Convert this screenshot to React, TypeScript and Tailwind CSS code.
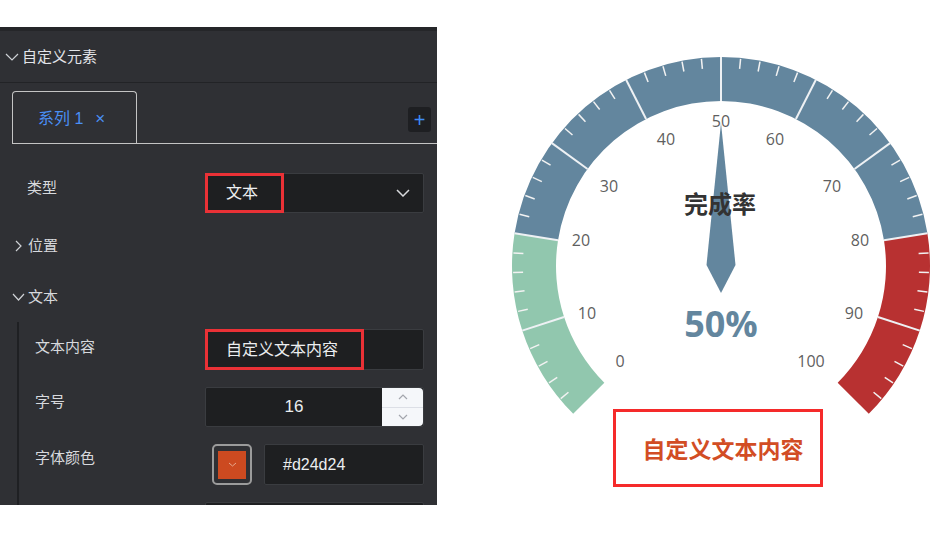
import React from 'react';

const CX = 721;
const CY = 266;
const R = 209;
const RI = 165;

const cn = '"Liberation Sans", "Noto Sans CJK SC", sans-serif';
const gaugeFont = '"Open Sans", "Noto Sans CJK SC", sans-serif';

function pt(v: number, rad: number): [number, number] {
  const a = ((225 - v * 2.7) * Math.PI) / 180;
  return [CX + rad * Math.cos(a), CY - rad * Math.sin(a)];
}

function band(v1: number, v2: number) {
  const [ox1, oy1] = pt(v1, R);
  const [ox2, oy2] = pt(v2, R);
  const [ix2, iy2] = pt(v2, RI);
  const [ix1, iy1] = pt(v1, RI);
  return `M${ox1} ${oy1} A${R} ${R} 0 0 1 ${ox2} ${oy2} L${ix2} ${iy2} A${RI} ${RI} 0 0 0 ${ix1} ${iy1} Z`;
}

const labels: [string, number, number][] = [
  ['0', 620, 361],
  ['10', 587, 313],
  ['20', 581, 240],
  ['30', 609, 186],
  ['40', 666, 139],
  ['50', 721, 121],
  ['60', 775, 139],
  ['70', 832, 186],
  ['80', 860, 240],
  ['90', 854, 313],
  ['100', 811, 361],
];

function Chevron({ dir, w, h, color = '#cfd2d6', sw = 1.2 }: { dir: 'down' | 'right' | 'up'; w: number; h: number; color?: string; sw?: number }) {
  const pts =
    dir === 'down'
      ? `1,1 ${w / 2},${h - 1} ${w - 1},1`
      : dir === 'up'
      ? `1,${h - 1} ${w / 2},1 ${w - 1},${h - 1}`
      : `1,1 ${w - 1},${h / 2} 1,${h - 1}`;
  return (
    <svg width={w} height={h} className="shrink-0">
      <polyline points={pts} fill="none" stroke={color} strokeWidth={sw} />
    </svg>
  );
}

function Gauge() {
  const ticks: number[] = [];
  for (let v = 2; v < 100; v += 2) if (v % 10 !== 0) ticks.push(v);
  const splits = [10, 20, 30, 40, 50, 60, 70, 80, 90];
  return (
    <svg width={496} height={544} viewBox="437 0 496 544" className="shrink-0">
      <path d={band(0, 20)} fill="#91c7ae" />
      <path d={band(20, 80)} fill="#63869e" />
      <path d={band(80, 100)} fill="#b83131" />
      {ticks.map((v) => {
        const [x1, y1] = pt(v, R - 1);
        const [x2, y2] = pt(v, R - 11);
        return <line key={v} x1={x1} y1={y1} x2={x2} y2={y2} stroke="#f2f2f2" strokeWidth={1.5} />;
      })}
      {splits.map((v) => {
        const [x1, y1] = pt(v, R);
        const [x2, y2] = pt(v, RI);
        return <line key={v} x1={x1} y1={y1} x2={x2} y2={y2} stroke="#eef1f4" strokeWidth={2} />;
      })}
      {labels.map(([t, x, y]) => (
        <text key={t} x={x} y={y} textAnchor="middle" dominantBaseline="central" fontSize={16} fill="#5f5f5f" style={{ fontFamily: gaugeFont }}>
          {t}
        </text>
      ))}
      {/* pointer sits under the title */}
      <polygon points="721,123 735.5,265 721,293 706.5,265" fill="#63869e" />
      <text x={720} y={203} textAnchor="middle" dominantBaseline="central" fontSize={24} fontWeight="bold" fill="#333333" style={{ fontFamily: gaugeFont }}>
        完成率
      </text>
      <text x={721} y={323} textAnchor="middle" dominantBaseline="central" fontSize={36} fontWeight="bold" fill="#63869e" style={{ fontFamily: gaugeFont }}>
        50%
      </text>
      <rect x={614.5} y={410.5} width={207} height={75} fill="none" stroke="#f52a2a" strokeWidth={3} />
      <text x={723} y={449} textAnchor="middle" dominantBaseline="central" fontSize={23} fontWeight="bold" fill="#d24d24" style={{ fontFamily: gaugeFont }}>
        自定义文本内容
      </text>
    </svg>
  );
}

export default function App() {
  return (
    <div className="flex h-[544px] w-[933px] overflow-hidden bg-white">
      {/* Settings panel */}
      <div
        className="mt-[27px] h-[478px] w-[437px] shrink-0 overflow-hidden bg-[#2f3034] text-[15px] leading-[22px] text-[#d7d9dd]"
        style={{ fontFamily: cn }}
      >
        <div className="h-[4px] bg-[#252629]" />
        <div className="flex h-[52px] items-center gap-[3px] border-b border-[#222326] pl-[5px]">
          <Chevron dir="down" w={14} h={8} />
          <span className="text-[#e2e4e8]">自定义元素</span>
        </div>

        {/* Tabs */}
        <div className="ml-[12px] mt-[8px] flex items-end justify-between border-b border-[#c4c4c4]">
          <div className="flex h-[52px] w-[125px] items-center rounded-t-[4px] border-x border-t border-[#c4c4c4] pl-[25px] pt-[3px] text-[16px] text-[#4a8ff5]">
            <span>系列 1</span>
            <span className="ml-[12px] text-[17px]">×</span>
          </div>
          <div className="mb-[11px] mr-[6px] flex h-[25px] w-[23px] items-center justify-center rounded-[3px] bg-[#1e1f22] text-[20px] leading-none text-[#3f8cf7]">
            +
          </div>
        </div>

        {/* 类型 */}
        <div className="mt-[29px] flex h-[40px]">
          <div className="w-[205px] pl-[27px] pt-[4px]">类型</div>
          <div className="relative flex w-[219px] items-center justify-between rounded-[2px] border border-[#3a3c40] bg-[#1e1f21] pl-[20px] pr-[13px] text-[16px] text-[#eceef0]">
            <span>文本</span>
            <Chevron dir="down" w={14} h={8} color="#d8dadd" sw={1.5} />
            <div className="absolute -left-px -top-px h-[40px] w-[79px] border-[3px] border-[#ea3136]" />
          </div>
        </div>

        <div className="mt-[22px] flex h-[22px] items-center gap-[6px] pl-[15px]">
          <Chevron dir="right" w={7} h={12} />
          <span>位置</span>
        </div>

        <div className="mt-[29px] flex h-[22px] items-center gap-[3px] pl-[12px]">
          <Chevron dir="down" w={13} h={8} />
          <span>文本</span>
        </div>

        {/* 文本 group */}
        <div className="ml-[17px] mt-[14px] border-l-2 border-[#1f2023] pt-[7px]">
          <div className="flex h-[41px]">
            <div className="w-[186px] pl-[16px] pt-[7px]">文本内容</div>
            <div className="relative flex w-[219px] items-center rounded-[2px] border border-[#3a3c40] bg-[#1e1f21] pl-[20px] text-[16px] text-[#eceef0]">
              <span>自定义文本内容</span>
              <div className="absolute -left-px -top-px h-[41px] w-[159px] border-[3px] border-[#ea3136]" />
            </div>
          </div>

          <div className="mt-[17px] flex h-[40px]">
            <div className="w-[186px] pl-[16px] pt-[4px]">字号</div>
            <div className="flex w-[219px] rounded-[2px] border border-[#3a3c40] bg-[#1e1f21]">
              <div className="flex flex-1 items-center justify-center text-[17px] text-[#eceef0]">16</div>
              <div className="flex w-[41px] flex-col rounded-r-[4px] bg-[#f5f7fa]">
                <div className="flex flex-1 items-center justify-center border-b border-[#dcdfe6]">
                  <Chevron dir="up" w={10} h={6} color="#a3a6ad" sw={1.2} />
                </div>
                <div className="flex flex-1 items-center justify-center">
                  <Chevron dir="down" w={10} h={6} color="#a3a6ad" sw={1.2} />
                </div>
              </div>
            </div>
          </div>

          <div className="mt-[17px] flex h-[41px]">
            <div className="w-[186px] pl-[16px] pt-[3px]">字体颜色</div>
            <div className="ml-[7px] flex h-[41px] w-[40px] items-center justify-center rounded-[5px] border-2 border-[#9b9b9b]">
              <div className="flex h-[28px] w-[28px] items-center justify-center bg-[#cc4a20]">
                <Chevron dir="down" w={9} h={5} color="#e7a88c" sw={1} />
              </div>
            </div>
            <div className="ml-[12px] flex w-[160px] items-center rounded-[2px] border border-[#3a3c40] bg-[#1e1f21] pl-[18px] text-[16px] text-[#eceef0]">
              #d24d24
            </div>
          </div>

          <div className="mt-[17px] flex h-[40px]">
            <div className="w-[186px]" />
            <div className="w-[219px] rounded-[2px] border border-[#3a3c40] bg-[#1e1f21]" />
          </div>
        </div>
      </div>

      {/* Gauge */}
      <Gauge />
    </div>
  );
}
